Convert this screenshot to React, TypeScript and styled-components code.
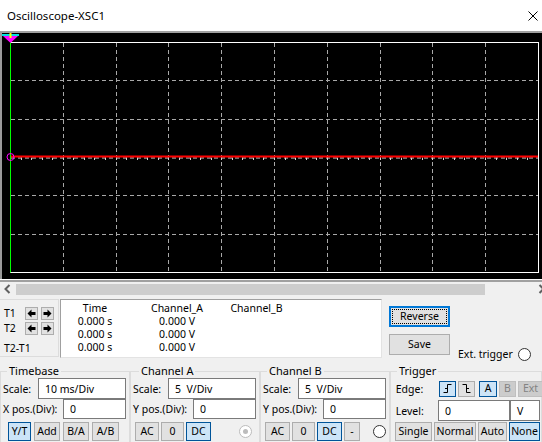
import styled, { createGlobalStyle } from "styled-components";

const GlobalStyle = createGlobalStyle`
    html, body {
        margin: 0;
        padding: 0;
        overflow: hidden;
        background: #f0f0f0;
    }
    body {
        font-family: "Noto Sans", "Liberation Sans", sans-serif;
        font-size: 10.5px;
        color: #000;
    }
`;

const Window = styled.div`
    width: 542px;
    height: 442px;
    display: flex;
    flex-direction: column;
    background: #f0f0f0;
    overflow: hidden;
`;

const TitleBar = styled.div`
    flex: none;
    height: 31px;
    display: flex;
    align-items: center;
    justify-content: space-between;
    padding: 0 4px 0 7px;
    background: #fff;
`;

const Title = styled.span`
    font-size: 11.5px;
    line-height: 14px;
    padding-top: 1px;
`;

const CloseIcon = styled.svg`
    width: 10px;
    height: 10px;
    margin-top: 1px;
`;

const ScopeArea = styled.div`
    flex: none;
    height: 246px;
    border-top: 2px solid #a0a0a0;
    border-left: 2px solid #9b9b9b;
    background: #000;
`;

const ScopeDivider = styled.div`
    flex: none;
    height: 0;
    border-top: 1px solid #fff;
    border-bottom: 2px solid #a0a0a0;
`;

const ScrollRow = styled.div`
    flex: none;
    height: 14px;
    display: flex;
    align-items: center;
    padding-left: 4px;
`;

const ScrollTrack = styled.div`
    width: 469px;
    height: 11px;
    margin-left: 5px;
    background: #cdcdcd;
`;

const ScrollArrow = styled.svg<{ $end?: boolean }>`
    width: 7px;
    height: 10px;
    margin-left: ${(p) => (p.$end ? "auto" : "0")};
    margin-right: ${(p) => (p.$end ? "-3px" : "0")};
`;

const ReadoutRow = styled.div`
    flex: none;
    height: 66px;
    display: flex;
    align-items: flex-start;
    padding-top: 3px;
    box-sizing: border-box;
`;

const CursorBox = styled.div`
    width: 59px;
    height: 58px;
    box-sizing: border-box;
    border: 1px solid #dcdcdc;
    border-left: none;
    padding: 6px 0 0 4px;
    display: flex;
    flex-direction: column;
    gap: 1px;
`;

const CursorRow = styled.div<{ $gapTop?: number }>`
    display: flex;
    align-items: center;
    height: 14px;
    margin-top: ${(p) => p.$gapTop ?? 0}px;
`;

const CursorLabel = styled.span`
    width: 21px;
    line-height: 14px;
    white-space: nowrap;
`;

const ArrowButton = styled.button`
    width: 13px;
    height: 13px;
    padding: 0;
    margin-right: 3px;
    display: flex;
    align-items: center;
    justify-content: center;
    background: #e1e1e1;
    border: 1px solid #adadad;
`;

const ReadoutTable = styled.div`
    width: 322px;
    height: 59px;
    margin-left: 1px;
    box-sizing: border-box;
    background: #fff;
    border: 1px solid;
    border-color: #a0a0a0 #e3e3e3 #e3e3e3 #a0a0a0;
    padding-top: 2px;
    display: grid;
    grid-template-columns: 68px 96px 63px;
    grid-auto-rows: 13px;
    line-height: 13px;
    text-align: center;
    white-space: nowrap;
    color: #000;
`;

const SideButtons = styled.div`
    display: flex;
    flex-direction: column;
    gap: 7px;
    margin-left: 7px;
    padding-top: 7px;
`;

const WinButton = styled.button<{ $variant?: "normal" | "active" | "disabled" | "focus"; $w: number; $h?: number }>`
    width: ${(p) => p.$w}px;
    height: ${(p) => p.$h ?? 19}px;
    flex: none;
    padding: 0;
    font-family: inherit;
    font-size: 10.5px;
    line-height: 1;
    display: flex;
    align-items: center;
    justify-content: center;
    box-sizing: border-box;
    color: ${(p) => (p.$variant === "disabled" ? "#838383" : "#000")};
    background: ${(p) =>
        p.$variant === "active" ? "#cce4f7" : p.$variant === "disabled" ? "#cccccc" : "#e1e1e1"};
    border: ${(p) =>
        p.$variant === "active"
            ? "1px solid #005499"
            : p.$variant === "focus"
            ? "2px solid #0078d7"
            : p.$variant === "disabled"
            ? "1px solid #bfbfbf"
            : "1px solid #adadad"};
    outline: ${(p) => (p.$variant === "focus" ? "1px dotted #000" : "none")};
    outline-offset: -4px;
`;

const ExtTrigger = styled.div`
    align-self: flex-end;
    display: flex;
    align-items: center;
    gap: 5px;
    margin-left: 8px;
    margin-bottom: 1px;
    white-space: nowrap;
`;

const Radio = styled.span<{ $disabled?: boolean; $mr?: number }>`
    width: 13px;
    height: 13px;
    flex: none;
    box-sizing: border-box;
    border-radius: 50%;
    background: #fff;
    border: 1px solid ${(p) => (p.$disabled ? "#bcbcbc" : "#333")};
    display: flex;
    align-items: center;
    justify-content: center;
    margin-left: auto;
    margin-right: ${(p) => p.$mr ?? 0}px;

    &::after {
        content: "";
        width: 5px;
        height: 5px;
        border-radius: 50%;
        background: ${(p) => (p.$disabled ? "#bcbcbc" : "transparent")};
    }
`;

const ControlsRow = styled.div`
    flex: 1;
    display: flex;
    padding-top: 2px;
`;

const Group = styled.fieldset<{ $w: number }>`
    width: ${(p) => p.$w}px;
    flex: none;
    box-sizing: border-box;
    margin: 0;
    padding: 0 3px 0 2px;
    min-width: 0;
    border: 1px solid #dcdcdc;
    border-bottom: none;
    display: flex;
    flex-direction: column;
`;

const GroupLabel = styled.legend<{ $ml: number }>`
    padding: 0 2px;
    margin-left: ${(p) => p.$ml}px;
    line-height: 14px;
    font-size: 11px;
`;

const FieldRow = styled.div<{ $h: number; $mt?: number }>`
    display: flex;
    align-items: center;
    height: ${(p) => p.$h}px;
    margin-top: ${(p) => p.$mt ?? 0}px;
`;

const FieldLabel = styled.span<{ $w?: number }>`
    white-space: pre;
    line-height: 14px;
    width: ${(p) => (p.$w ? `${p.$w}px` : "auto")};
    flex: none;
`;

const TextBox = styled.div<{ $w: number; $h: number; $auto?: boolean }>`
    width: ${(p) => p.$w}px;
    height: ${(p) => p.$h}px;
    flex: none;
    margin-left: ${(p) => (p.$auto ? "auto" : "0")};
    box-sizing: border-box;
    background: #fff;
    border: 1px solid #7a7a7a;
    padding-left: 6px;
    display: flex;
    align-items: center;
    white-space: pre;
`;

const ButtonRow = styled.div<{ $pl: number; $gap: number; $mt?: number }>`
    display: flex;
    align-items: center;
    gap: ${(p) => p.$gap}px;
    padding-left: ${(p) => p.$pl}px;
    margin-top: ${(p) => p.$mt ?? 3}px;
`;

const EdgeIcon = styled.svg`
    width: 11px;
    height: 11px;
`;

const COLS = Array.from({ length: 9 }, (_, i) => Math.round(8 + 52.8 * (i + 1)) + 0.5);
const ROWS = [1, 2, 4, 5].map((j) => Math.round(9 + (230 / 6) * j) + 0.5);
const TICKS = Array.from({ length: 49 }, (_, i) => Math.round(8 + 10.56 * (i + 1)) + 0.5);

function Screen() {
    return (
        <svg width={540} height={246} viewBox="0 0 540 246">
            {COLS.map((x) => (
                <line key={x} x1={x} y1={10} x2={x} y2={239} stroke="#a8a8a8" strokeDasharray="4 3" />
            ))}
            {ROWS.map((y) => (
                <line key={y} x1={9} y1={y} x2={536} y2={y} stroke="#a8a8a8" strokeDasharray="4 3" />
            ))}
            <line x1={9} y1={125} x2={536} y2={125} stroke="#d8d8d8" strokeDasharray="4 3" />
            {TICKS.map((x) => (
                <line key={x} x1={x} y1={124.5} x2={x} y2={127} stroke="#d8d8d8" />
            ))}
            <rect x={8.5} y={9.5} width={528} height={230} fill="none" stroke="#fff" />
            <line x1={9} y1={123.5} x2={536} y2={123.5} stroke="#ff0000" strokeWidth={2} />
            <line x1={8.5} y1={3} x2={8.5} y2={239.5} stroke="#00ff00" />
            <circle cx={8.5} cy={124} r={3.5} fill="none" stroke="#ff00ff" />
            <rect x={0} y={1} width={17} height={2} fill="#00e0e0" />
            <polygon points="1,3 16,3 8.5,10" fill="#ff00ff" />
            <rect x={7.5} y={0} width={2} height={5} fill="#ffff00" />
        </svg>
    );
}

function Arrow({ dir }: { dir: "left" | "right" }) {
    return (
        <svg width={9} height={9} viewBox="0 0 9 9">
            <path
                d="M0.5 4.5 L4.5 0.5 L4.5 3 L8.5 3 L8.5 6 L4.5 6 L4.5 8.5 Z"
                fill="#000"
                transform={dir === "right" ? "matrix(-1 0 0 1 9 0)" : undefined}
            />
        </svg>
    );
}

function App() {
    return (
        <Window>
            <GlobalStyle />
            <TitleBar>
                <Title>Oscilloscope-XSC1</Title>
                <CloseIcon viewBox="0 0 10 10">
                    <path d="M0.5 0.5 L9.5 9.5 M9.5 0.5 L0.5 9.5" stroke="#000" strokeWidth={1} />
                </CloseIcon>
            </TitleBar>

            <ScopeArea>
                <Screen />
            </ScopeArea>
            <ScopeDivider />

            <ScrollRow>
                <ScrollArrow viewBox="0 0 7 10">
                    <path d="M5.5 1 L1.5 5 L5.5 9" fill="none" stroke="#606060" strokeWidth={2} />
                </ScrollArrow>
                <ScrollTrack />
                <ScrollArrow $end viewBox="0 0 7 10">
                    <path d="M1.5 1 L5.5 5 L1.5 9" fill="none" stroke="#606060" strokeWidth={2} />
                </ScrollArrow>
            </ScrollRow>

            <ReadoutRow>
                <CursorBox>
                    <CursorRow>
                        <CursorLabel>T1</CursorLabel>
                        <ArrowButton><Arrow dir="left" /></ArrowButton>
                        <ArrowButton><Arrow dir="right" /></ArrowButton>
                    </CursorRow>
                    <CursorRow>
                        <CursorLabel>T2</CursorLabel>
                        <ArrowButton><Arrow dir="left" /></ArrowButton>
                        <ArrowButton><Arrow dir="right" /></ArrowButton>
                    </CursorRow>
                    <CursorRow $gapTop={5}>
                        <CursorLabel>T2-T1</CursorLabel>
                    </CursorRow>
                </CursorBox>

                <ReadoutTable>
                    <span>Time</span>
                    <span>Channel_A</span>
                    <span>Channel_B</span>
                    <span>0.000 s</span>
                    <span>0.000 V</span>
                    <span />
                    <span>0.000 s</span>
                    <span>0.000 V</span>
                    <span />
                    <span>0.000 s</span>
                    <span>0.000 V</span>
                    <span />
                </ReadoutTable>

                <SideButtons>
                    <WinButton $variant="focus" $w={61} $h={21}>Reverse</WinButton>
                    <WinButton $w={61} $h={21}>Save</WinButton>
                </SideButtons>

                <ExtTrigger>
                    <span>Ext. trigger</span>
                    <Radio />
                </ExtTrigger>
            </ReadoutRow>

            <ControlsRow>
                <Group $w={130}>
                    <GroupLabel $ml={4}>Timebase</GroupLabel>
                    <FieldRow $h={21}>
                        <FieldLabel>Scale:</FieldLabel>
                        <TextBox $w={88} $h={21} $auto>10 ms/Div</TextBox>
                    </FieldRow>
                    <FieldRow $h={20}>
                        <FieldLabel>X pos.(Div):</FieldLabel>
                        <TextBox $w={63} $h={20} $auto>0</TextBox>
                    </FieldRow>
                    <ButtonRow $pl={5} $gap={3}>
                        <WinButton $variant="active" $w={23}>Y/T</WinButton>
                        <WinButton $w={26}>Add</WinButton>
                        <WinButton $w={26}>B/A</WinButton>
                        <WinButton $w={27}>A/B</WinButton>
                    </ButtonRow>
                </Group>

                <Group $w={130}>
                    <GroupLabel $ml={6}>Channel A</GroupLabel>
                    <FieldRow $h={21}>
                        <FieldLabel>Scale:</FieldLabel>
                        <TextBox $w={88} $h={21} $auto>5  V/Div</TextBox>
                    </FieldRow>
                    <FieldRow $h={20}>
                        <FieldLabel>Y pos.(Div):</FieldLabel>
                        <TextBox $w={63} $h={20} $auto>0</TextBox>
                    </FieldRow>
                    <ButtonRow $pl={2} $gap={2}>
                        <WinButton $w={24}>AC</WinButton>
                        <WinButton $w={23}>0</WinButton>
                        <WinButton $variant="active" $w={25}>DC</WinButton>
                        <Radio $disabled $mr={4} />
                    </ButtonRow>
                </Group>

                <Group $w={130}>
                    <GroupLabel $ml={4}>Channel B</GroupLabel>
                    <FieldRow $h={21}>
                        <FieldLabel>Scale:</FieldLabel>
                        <TextBox $w={88} $h={21} $auto>5  V/Div</TextBox>
                    </FieldRow>
                    <FieldRow $h={20}>
                        <FieldLabel>Y pos.(Div):</FieldLabel>
                        <TextBox $w={63} $h={20} $auto>0</TextBox>
                    </FieldRow>
                    <ButtonRow $pl={2} $gap={2}>
                        <WinButton $w={25}>AC</WinButton>
                        <WinButton $w={23}>0</WinButton>
                        <WinButton $variant="active" $w={25}>DC</WinButton>
                        <WinButton $w={16}>-</WinButton>
                        <Radio $mr={0} />
                    </ButtonRow>
                </Group>

                <Group $w={152}>
                    <GroupLabel $ml={4}>Trigger</GroupLabel>
                    <FieldRow $h={21}>
                        <FieldLabel $w={46}> Edge:</FieldLabel>
                        <ButtonRow $pl={0} $gap={2} $mt={0}>
                            <WinButton $variant="active" $w={17} $h={16}>
                                <EdgeIcon viewBox="0 0 11 11">
                                    <path d="M1.5 9.5 H5.5 V1.5 H9.5 M3 5.5 H5.5" fill="none" stroke="#000" />
                                </EdgeIcon>
                            </WinButton>
                            <WinButton $w={17} $h={16}>
                                <EdgeIcon viewBox="0 0 11 11">
                                    <path d="M1.5 1.5 H5.5 V9.5 H9.5 M5.5 5.5 H8" fill="none" stroke="#000" />
                                </EdgeIcon>
                            </WinButton>
                            <WinButton $variant="active" $w={18} $h={16} style={{ marginLeft: 2 }}>A</WinButton>
                            <WinButton $variant="disabled" $w={17} $h={16}>B</WinButton>
                            <WinButton $variant="disabled" $w={25} $h={16}>Ext</WinButton>
                        </ButtonRow>
                    </FieldRow>
                    <FieldRow $h={21} $mt={1}>
                        <FieldLabel $w={45}> Level:</FieldLabel>
                        <TextBox $w={72} $h={21}>0</TextBox>
                        <TextBox $w={30} $h={21}>V</TextBox>
                    </FieldRow>
                    <ButtonRow $pl={2} $gap={2} $mt={1}>
                        <WinButton $w={37}>Single</WinButton>
                        <WinButton $w={42}>Normal</WinButton>
                        <WinButton $w={29}>Auto</WinButton>
                        <WinButton $variant="active" $w={31}>None</WinButton>
                    </ButtonRow>
                </Group>
            </ControlsRow>
        </Window>
    );
}

export default App;
